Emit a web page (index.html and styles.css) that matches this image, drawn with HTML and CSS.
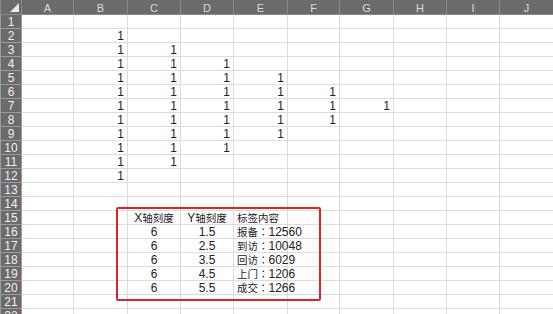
FILE: index.html
```html
<!DOCTYPE html>
<html lang="zh-CN">
<head>
<meta charset="utf-8">
<title>Sheet1</title>
<link rel="stylesheet" href="styles.css">
</head>
<body>
<div class="sheet">
<table class="grid">
   <colgroup>
      <col class="rh"><col class="c52"><col class="c54"><col class="c53"><col class="c53"><col class="c54">
      <col class="c52"><col class="c54"><col class="c53"><col class="c53"><col class="c54">
   </colgroup>
   <tr class="colhead">
      <th class="corner"><span class="tri"></span></th>
      <th>A</th><th>B</th><th>C</th><th>D</th><th>E</th><th>F</th><th>G</th><th>H</th><th>I</th><th>J</th>
   </tr>
   <tr><th>1</th><td></td><td></td><td></td><td></td><td></td><td></td><td></td><td></td><td></td><td></td></tr>
   <tr><th>2</th><td></td><td class="n">1</td><td></td><td></td><td></td><td></td><td></td><td></td><td></td><td></td></tr>
   <tr><th>3</th><td></td><td class="n">1</td><td class="n">1</td><td></td><td></td><td></td><td></td><td></td><td></td><td></td></tr>
   <tr><th>4</th><td></td><td class="n">1</td><td class="n">1</td><td class="n">1</td><td></td><td></td><td></td><td></td><td></td><td></td></tr>
   <tr><th>5</th><td></td><td class="n">1</td><td class="n">1</td><td class="n">1</td><td class="n">1</td><td></td><td></td><td></td><td></td><td></td></tr>
   <tr><th>6</th><td></td><td class="n">1</td><td class="n">1</td><td class="n">1</td><td class="n">1</td><td class="n">1</td><td></td><td></td><td></td><td></td></tr>
   <tr><th>7</th><td></td><td class="n">1</td><td class="n">1</td><td class="n">1</td><td class="n">1</td><td class="n">1</td><td class="n">1</td><td></td><td></td><td></td></tr>
   <tr><th>8</th><td></td><td class="n">1</td><td class="n">1</td><td class="n">1</td><td class="n">1</td><td class="n">1</td><td></td><td></td><td></td><td></td></tr>
   <tr><th>9</th><td></td><td class="n">1</td><td class="n">1</td><td class="n">1</td><td class="n">1</td><td></td><td></td><td></td><td></td><td></td></tr>
   <tr><th>10</th><td></td><td class="n">1</td><td class="n">1</td><td class="n">1</td><td></td><td></td><td></td><td></td><td></td><td></td></tr>
   <tr><th>11</th><td></td><td class="n">1</td><td class="n">1</td><td></td><td></td><td></td><td></td><td></td><td></td><td></td></tr>
   <tr><th>12</th><td></td><td class="n">1</td><td></td><td></td><td></td><td></td><td></td><td></td><td></td><td></td></tr>
   <tr><th>13</th><td></td><td></td><td></td><td></td><td></td><td></td><td></td><td></td><td></td><td></td></tr>
   <tr><th>14</th><td></td><td></td><td></td><td></td><td></td><td></td><td></td><td></td><td></td><td></td></tr>
   <tr><th>15</th><td></td><td></td><td class="c">X<span class="zh">轴刻度</span></td><td class="c">Y<span class="zh">轴刻度</span></td><td class="t"><span class="zh">标签内容</span></td><td></td><td></td><td></td><td></td><td></td></tr>
   <tr><th>16</th><td></td><td></td><td class="c">6</td><td class="c">1.5</td><td class="t"><span class="zh">报备</span><span class="zh colon" lang="zh-TW">：</span>12560</td><td></td><td></td><td></td><td></td><td></td></tr>
   <tr><th>17</th><td></td><td></td><td class="c">6</td><td class="c">2.5</td><td class="t"><span class="zh">到访</span><span class="zh colon" lang="zh-TW">：</span>10048</td><td></td><td></td><td></td><td></td><td></td></tr>
   <tr><th>18</th><td></td><td></td><td class="c">6</td><td class="c">3.5</td><td class="t"><span class="zh">回访</span><span class="zh colon" lang="zh-TW">：</span>6029</td><td></td><td></td><td></td><td></td><td></td></tr>
   <tr><th>19</th><td></td><td></td><td class="c">6</td><td class="c">4.5</td><td class="t"><span class="zh">上门</span><span class="zh colon" lang="zh-TW">：</span>1206</td><td></td><td></td><td></td><td></td><td></td></tr>
   <tr><th>20</th><td></td><td></td><td class="c">6</td><td class="c">5.5</td><td class="t"><span class="zh">成交</span><span class="zh colon" lang="zh-TW">：</span>1266</td><td></td><td></td><td></td><td></td><td></td></tr>
   <tr><th>21</th><td></td><td></td><td></td><td></td><td></td><td></td><td></td><td></td><td></td><td></td></tr>
   <tr><th>22</th><td></td><td></td><td></td><td></td><td></td><td></td><td></td><td></td><td></td><td></td></tr>
</table>
<div class="mark"></div>
</div>
</body>
</html>
```

FILE: styles.css
```css
/* worksheet screenshot */
   html, body  {margin: 0px; padding: 0px; background-color: white; overflow: hidden}
   .sheet      {position: relative; width: 553px; height: 314px; overflow: hidden}

   table.grid  {border-collapse: collapse; table-layout: fixed; width: 553px;
                font-family: "Liberation Sans", "Noto Sans CJK SC", sans-serif; font-size: 12px;
                color: #222}
   col.rh      {width: 21px}
   col.c52     {width: 52px}
   col.c53     {width: 53px}
   col.c54     {width: 54px}

   table.grid tr    {height: 14px}
   table.grid td    {border: 1px solid #dcdcdc; padding: 0px 3px 0px 3px; line-height: 12px;
                     vertical-align: bottom; white-space: nowrap; overflow: visible}
   table.grid th    {background-color: #6b6b6b; color: #f0f0f0; font-weight: normal;
                     border: 1px solid #9c9c9c; padding: 0px; line-height: 12px;
                     text-align: center; vertical-align: bottom; font-size: 12px}
   tr.colhead       {height: 13px}
   tr.colhead th    {color: #dcdcdc; font-size: 11px; border-top: 0px; border-color: #8a8a8a}
   th.corner        {position: relative; border-left: 0px}

   .tri        {position: absolute; right: 2px; bottom: 2px; width: 0px; height: 0px;
                border-left: 9px solid transparent; border-bottom: 9px solid #e8e8e8}

   td.n        {text-align: right; padding-right: 2px}
   td.c        {text-align: center}
   td.t        {text-align: left; padding-left: 2px}
   .zh         {font-family: "Noto Sans CJK SC", sans-serif; font-size: 10.5px}
   .colon      {font-family: "Noto Sans CJK TC", sans-serif}

   .mark       {position: absolute; left: 116px; top: 207px; width: 201px; height: 90px;
                border: 2px solid #d8262a; border-radius: 2px}
```
